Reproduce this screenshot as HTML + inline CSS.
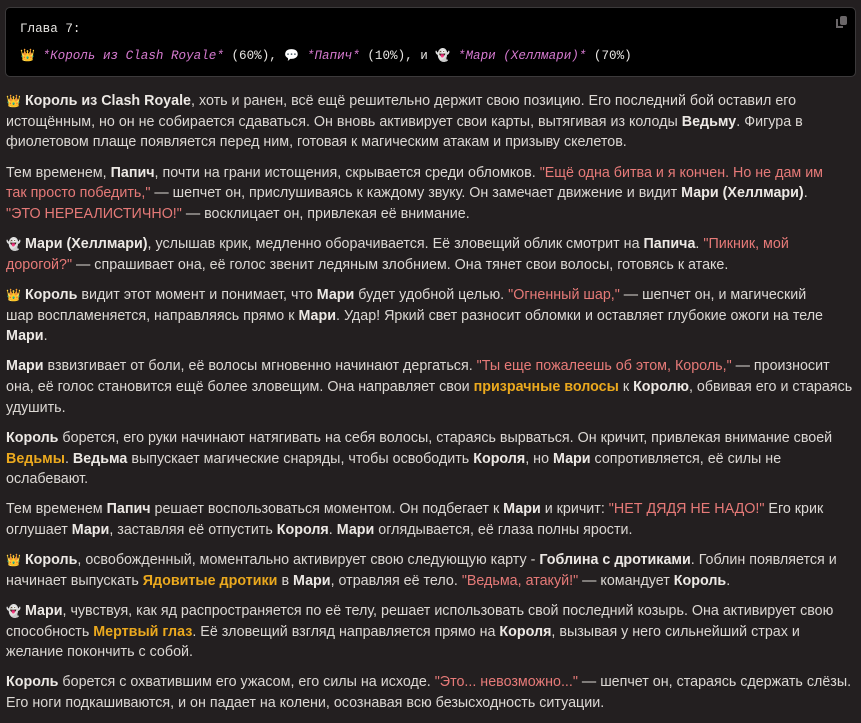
<!DOCTYPE html>
<html><head><meta charset="utf-8"><style>
html,body{margin:0;padding:0;background:#231f20;}
body{width:861px;height:716px;overflow:hidden;font-family:"Liberation Sans","DejaVu Sans",sans-serif;font-size:14.3px;color:#dcd8d4;}
.code{position:absolute;left:5px;top:7px;width:849px;height:68px;background:#000;border:1px solid #3c3a3b;border-radius:5px;font-family:"Liberation Mono","DejaVu Sans Mono",monospace;font-size:12.6px;color:#e8e6e3;}
.code .l1{position:absolute;left:14px;top:14px;}
.code .l2{position:absolute;left:14px;top:40px;white-space:pre;}
.code i{color:#d67ad0;}
.copy{position:absolute;right:8px;top:8px;width:7px;height:9px;background:#6a6668;border-radius:2px;}
.copy:before{content:"";position:absolute;left:-4px;top:3px;width:5px;height:7px;border-left:2px solid #6a6668;border-bottom:2px solid #6a6668;}
.txt{position:absolute;left:6px;top:91px;width:900px;white-space:nowrap;}
p{margin:0 0 9.4px;line-height:20.7px;}
b{color:#ece8e4;}
.r{color:#e67a78;}
.y{color:#eba91e;font-weight:bold;}
.e{font-size:12px;}
</style></head><body>
<div class="code"><div class="copy"></div>
<div class="l1">Глава 7:</div>
<div class="l2"><span class="e">👑</span> <i>*Король из Clash Royale*</i> (60%), <span class="e">💬</span> <i>*Папич*</i> (10%), и <span class="e">👻</span> <i>*Мари (Хеллмари)*</i> (70%)</div>
</div>
<div class="txt">
<p><span class="e">👑</span> <b>Король из Clash Royale</b>, хоть и ранен, всё ещё решительно держит свою позицию. Его последний бой оставил его<br>истощённым, но он не собирается сдаваться. Он вновь активирует свои карты, вытягивая из колоды <b>Ведьму</b>. Фигура в<br>фиолетовом плаще появляется перед ним, готовая к магическим атакам и призыву скелетов.</p>
<p>Тем временем, <b>Папич</b>, почти на грани истощения, скрывается среди обломков. <span class="r">"Ещё одна битва и я кончен. Но не дам им<br>так просто победить,"</span> — шепчет он, прислушиваясь к каждому звуку. Он замечает движение и видит <b>Мари (Хеллмари)</b>.<br><span class="r">"ЭТО НЕРЕАЛИСТИЧНО!"</span> — восклицает он, привлекая её внимание.</p>
<p><span class="e">👻</span> <b>Мари (Хеллмари)</b>, услышав крик, медленно оборачивается. Её зловещий облик смотрит на <b>Папича</b>. <span class="r">"Пикник, мой<br>дорогой?"</span> — спрашивает она, её голос звенит ледяным злобнием. Она тянет свои волосы, готовясь к атаке.</p>
<p><span class="e">👑</span> <b>Король</b> видит этот момент и понимает, что <b>Мари</b> будет удобной целью. <span class="r">"Огненный шар,"</span> — шепчет он, и магический<br>шар воспламеняется, направляясь прямо к <b>Мари</b>. Удар! Яркий свет разносит обломки и оставляет глубокие ожоги на теле<br><b>Мари</b>.</p>
<p><b>Мари</b> взвизгивает от боли, её волосы мгновенно начинают дергаться. <span class="r">"Ты еще пожалеешь об этом, Король,"</span> — произносит<br>она, её голос становится ещё более зловещим. Она направляет свои <span class="y">призрачные волосы</span> к <b>Королю</b>, обвивая его и стараясь<br>удушить.</p>
<p><b>Король</b> борется, его руки начинают натягивать на себя волосы, стараясь вырваться. Он кричит, привлекая внимание своей<br><span class="y">Ведьмы</span>. <b>Ведьма</b> выпускает магические снаряды, чтобы освободить <b>Короля</b>, но <b>Мари</b> сопротивляется, её силы не<br>ослабевают.</p>
<p>Тем временем <b>Папич</b> решает воспользоваться моментом. Он подбегает к <b>Мари</b> и кричит: <span class="r">"НЕТ ДЯДЯ НЕ НАДО!"</span> Его крик<br>оглушает <b>Мари</b>, заставляя её отпустить <b>Короля</b>. <b>Мари</b> оглядывается, её глаза полны ярости.</p>
<p><span class="e">👑</span> <b>Король</b>, освобожденный, моментально активирует свою следующую карту - <b>Гоблина с дротиками</b>. Гоблин появляется и<br>начинает выпускать <span class="y">Ядовитые дротики</span> в <b>Мари</b>, отравляя её тело. <span class="r">"Ведьма, атакуй!"</span> — командует <b>Король</b>.</p>
<p><span class="e">👻</span> <b>Мари</b>, чувствуя, как яд распространяется по её телу, решает использовать свой последний козырь. Она активирует свою<br>способность <span class="y">Мертвый глаз</span>. Её зловещий взгляд направляется прямо на <b>Короля</b>, вызывая у него сильнейший страх и<br>желание покончить с собой.</p>
<p><b>Король</b> борется с охватившим его ужасом, его силы на исходе. <span class="r">"Это... невозможно..."</span> — шепчет он, стараясь сдержать слёзы.<br>Его ноги подкашиваются, и он падает на колени, осознавая всю безысходность ситуации.</p>
</div>
</body></html>
